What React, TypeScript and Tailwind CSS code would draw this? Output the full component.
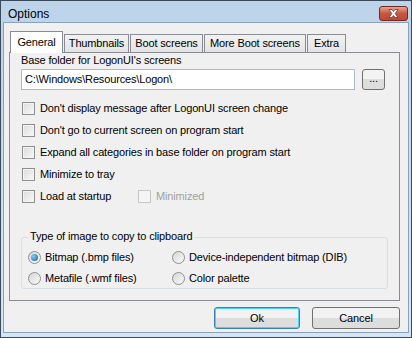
import React from 'react';

const font = "font-['Tahoma','Liberation_Sans',sans-serif]";

const CheckBox = ({ label, disabled }: { label: string; disabled?: boolean }) => (
  <label className="flex h-[22px] items-center gap-[5px]">
    <span
      className={`h-[13px] w-[13px] border ${
        disabled
          ? 'border-[#c6c6c6] bg-[#f4f4f4]'
          : 'border-[#8f8f8f] bg-gradient-to-br from-[#dcdcdc] to-[#f8f8f8] shadow-[inset_0_0_0_1px_#f4f4f4]'
      }`}
    />
    <span className={disabled ? 'text-[#a0a0a0]' : 'text-black'}>{label}</span>
  </label>
);

const Radio = ({ label, checked }: { label: string; checked?: boolean }) => (
  <label className="flex h-[21px] items-center gap-[4px]">
    <span className="flex h-[13px] w-[13px] items-center justify-center rounded-full border border-[#8e8f8f] bg-gradient-to-br from-[#d6d6d6] to-[#fbfbfb]">
      {checked && (
        <span className="h-[7px] w-[7px] rounded-full bg-[radial-gradient(circle_at_35%_35%,#7fd2f7,#0f5c9a)]" />
      )}
    </span>
    <span>{label}</span>
  </label>
);

const Tab = ({ label, active, w }: { label: string; active?: boolean; w: string }) =>
  active ? (
    <div
      className={`${w} relative z-10 -mb-px flex h-[22px] items-center justify-center border border-b-0 border-[#898c95] bg-white`}
    >
      {label}
    </div>
  ) : (
    <div
      className={`${w} flex h-[18px] items-center justify-center border border-b-0 border-[#898c95] bg-gradient-to-b from-[#f2f2f2] to-[#e3e3e3]`}
    >
      {label}
    </div>
  );

const Button = ({ label, focused, w }: { label: string; focused?: boolean; w: string }) => (
  <button
    className={`${w} h-[22px] rounded-[3px] border ${
      focused ? 'border-[#3c7fb1] shadow-[inset_0_0_0_1px_#48d3fb]' : 'border-[#707070]'
    } bg-gradient-to-b from-[#f2f2f2] from-50% to-[#dddddd] to-50% text-black`}
  >
    {label}
  </button>
);

export default function App() {
  return (
    <div
      className={`${font} flex h-[338px] w-[412px] flex-col border border-[#3b4b5c] bg-gradient-to-b from-[#bcd3ea] to-[#d6e6f4] text-[11px] leading-none tracking-[-0.15px] text-black`}
    >
      {/* title bar */}
      <div className="flex h-[21px] shrink-0 items-center justify-between pl-[7px] pr-[3px]">
        <span className="pt-[4px] text-[12px] tracking-normal">Options</span>
        <div className="mt-[3px] flex h-[15px] w-[29px] items-center justify-center rounded-[3px] border border-[#6d2a22] bg-gradient-to-b from-[#e8a392] via-[#c8553f] to-[#bf4a32]">
          <svg width="11" height="9" viewBox="0 0 11 9">
            <path
              d="M1 0.5 L4 0.5 L5.5 2.5 L7 0.5 L10 0.5 L7.2 4.5 L10 8.5 L7 8.5 L5.5 6.5 L4 8.5 L1 8.5 L3.8 4.5 Z"
              fill="white"
              stroke="#5a2a22"
              strokeWidth="0.7"
            />
          </svg>
        </div>
      </div>

      {/* client area */}
      <div className="mx-[2px] mb-[4px] flex flex-1 flex-col border border-[#8aa1b8] bg-[#f0f0f0] px-[5px] pt-[7px]">
        {/* tabs */}
        <div className="flex h-[22px] items-end pl-px">
          <Tab label="General" active w="w-[53px]" />
          <Tab label="Thumbnails" w="w-[65px] ml-px" />
          <Tab label="Boot screens" w="w-[73px] ml-px" />
          <Tab label="More Boot screens" w="w-[102px] ml-px" />
          <Tab label="Extra" w="w-[39px] ml-px" />
        </div>

        {/* panel */}
        <div className="mr-[3px] flex h-[249px] flex-col border border-[#898c95] bg-[#f0f0f0] pl-[11px] pr-[13px] pt-[2px]">
          <div className="h-[14px]">Base folder for LogonUI's screens</div>
          <div className="flex items-center gap-[7px]">
            <div className="flex h-[21px] w-[334px] items-center border border-[#a3bbd6] bg-white pl-[3px]">
              C:\Windows\Resources\Logon\
            </div>
            <button className="h-[21px] w-[23px] rounded-[3px] border border-[#707070] bg-gradient-to-b from-[#f2f2f2] from-50% to-[#dddddd] to-50% pb-[2px]">
              ...
            </button>
          </div>

          <div className="mt-[7px] flex flex-col pl-px">
            <CheckBox label="Don't display message after LogonUI screen change" />
            <CheckBox label="Don't go to current screen on program start" />
            <CheckBox label="Expand all categories in base folder on program start" />
            <CheckBox label="Minimize to tray" />
            <div className="flex">
              <div className="w-[116px]">
                <CheckBox label="Load at startup" />
              </div>
              <CheckBox label="Minimized" disabled />
            </div>
          </div>

          {/* group box */}
          <div className="relative mt-[30px] h-[52px] w-[367px] rounded-[3px] border border-[#d5dfe5]">
            <span className="absolute -top-[7px] left-[6px] bg-[#f0f0f0] px-[2px]">
              Type of image to copy to clipboard
            </span>
            <div className="grid grid-cols-[144px_1fr] pl-[6px] pt-[9px]">
              <Radio label="Bitmap (.bmp files)" checked />
              <Radio label="Device-independent bitmap (DIB)" />
              <Radio label="Metafile (.wmf files)" />
              <Radio label="Color palette" />
            </div>
          </div>
        </div>

        {/* dialog buttons */}
        <div className="mr-[3px] mt-[6px] flex justify-end gap-[12px]">
          <Button label="Ok" focused w="w-[86px]" />
          <Button label="Cancel" w="w-[88px]" />
        </div>
      </div>
    </div>
  );
}
